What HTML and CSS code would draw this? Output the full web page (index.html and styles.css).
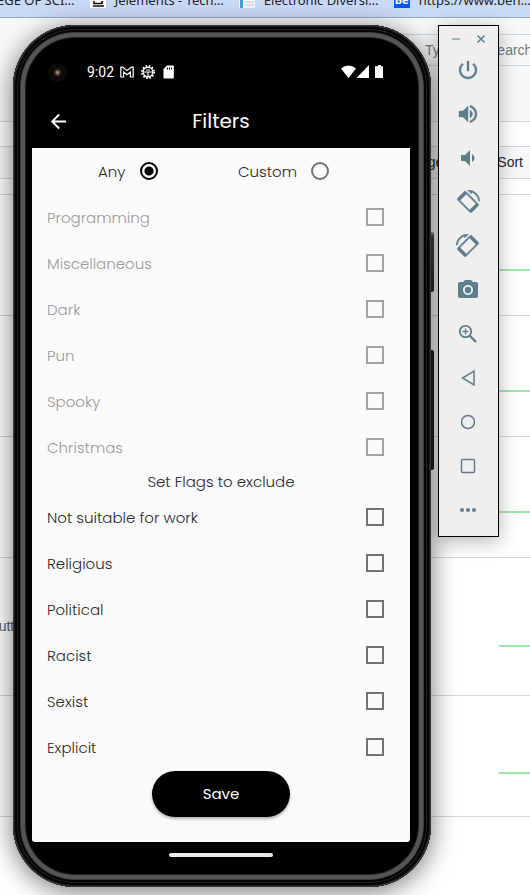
FILE: index.html
```html
<!DOCTYPE html>
<html lang="en">
<head>
<meta charset="utf-8">
<meta name="viewport" content="width=device-width, initial-scale=1">
<title>Filters</title>
<link rel="stylesheet" href="styles.css">
</head>
<body>
<div class="desktop">
  <div class="browser">
    <nav class="bookmarks">
      <a class="bookmark bookmark-first" href="#">EGE OF SCI…</a>
      <a class="bookmark" href="#"><svg class="favicon" viewBox="0 0 16 16"><rect width="16" height="16" fill="#fff"/><path d="M4 9v2.500h8V9M3 14h11" fill="none" stroke="#111" stroke-width="1.600"/></svg><span>Jelements - Tech…</span></a>
      <a class="bookmark" href="#"><svg class="favicon" viewBox="0 0 16 16"><rect width="16" height="16" fill="#f4f6f8"/><path d="M1 8h3v8H1z" fill="#39a5dc"/><path d="M6 10h9M6 13h9" stroke="#c3cbd3"/></svg><span>Electronic Diversi…</span></a>
      <a class="bookmark" href="#"><span class="favicon be">Be</span><span>https://www.beh…</span></a>
    </nav>
    <header class="site-header">
      <input class="search" type="text" placeholder="Type  /  to search" aria-label="Search">
    </header>
    <div class="list-bar"><button type="button">Language</button><button type="button">Sort</button></div>
    <div class="repos">
      <div class="repo"><i class="spark"></i></div>
      <div class="repo"><i class="spark"></i></div>
      <div class="repo"><i class="spark"></i></div>
      <div class="repo repo-tall"><span class="topic">Flutter</span><i class="spark"></i></div>
      <div class="repo"><i class="spark"></i></div>
    </div>
  </div>

  <div class="phone">
    <i class="side-key power-key"></i>
    <i class="side-key volume-key"></i>
    <div class="screen">
      <div class="status">
        <i class="lens"></i>
        <span class="clock">9:02</span>
        <svg class="s-icon" viewBox="0 0 14 14"><path d="M.8 12V2.200h2L7 5.600l4.200-3.400h2V12h-2.800V7L7 9.800 3.600 7v5z" fill="none" stroke="#fff" stroke-width="1.200"/></svg>
        <svg class="s-icon" viewBox="0 0 14 14"><circle cx="7" cy="7" r="6" fill="none" stroke="#fff" stroke-width="2" stroke-dasharray="1.600 1.540"/><circle cx="7" cy="7" r="4.800" fill="none" stroke="#fff" stroke-width="1.400"/><path d="M2.500 7h9M7 7v5M5 5h4" stroke="#fff" stroke-width="1.200"/></svg>
        <svg class="s-icon" viewBox="0 0 14 14"><path d="M5 .5h6q.8 0 .8.8v11.400q0 .8-.8.8H2.300q-.8 0-.8-.8V4z" fill="#fff"/><path d="M5.500 2.500v2M7.500 2.500v2M9.500 2.500v2" stroke="#000"/></svg>
        <svg class="signals" viewBox="0 0 44 14"><path d="M0 3.500Q7.500-2.500 15 3.500L7.500 13zM28 0v13H15.500zM37 0h3v1.200h2V13h-8V1.200h3z" fill="#fff"/></svg>
      </div>
      <div class="app-bar">
        <button class="back" type="button" aria-label="Back"><svg viewBox="0 0 24 24"><path d="M20 11H7.830l5.590-5.590L12 4l-8 8 8 8 1.410-1.410L7.830 13H20v-2z" fill="currentColor"/></svg></button>
        <h1>Filters</h1>
      </div>
      <form class="filters">
        <div class="mode">
          <label for="any">Any</label><input id="any" type="radio" name="mode" checked>
          <label for="custom">Custom</label><input id="custom" type="radio" name="mode">
        </div>
        <label class="row off">Programming<input type="checkbox" disabled></label>
        <label class="row off">Miscellaneous<input type="checkbox" disabled></label>
        <label class="row off">Dark<input type="checkbox" disabled></label>
        <label class="row off">Pun<input type="checkbox" disabled></label>
        <label class="row off">Spooky<input type="checkbox" disabled></label>
        <label class="row off">Christmas<input type="checkbox" disabled></label>
        <h2>Set Flags to exclude</h2>
        <label class="row">Not suitable for work<input type="checkbox"></label>
        <label class="row">Religious<input type="checkbox"></label>
        <label class="row">Political<input type="checkbox"></label>
        <label class="row">Racist<input type="checkbox"></label>
        <label class="row">Sexist<input type="checkbox"></label>
        <label class="row">Explicit<input type="checkbox"></label>
        <button class="save" type="button">Save</button>
      </form>
      <div class="home"><i></i></div>
    </div>
  </div>

  <div class="toolbar">
    <div class="window-keys">
      <button type="button" aria-label="Minimize"><svg viewBox="0 0 10 10"><path d="M1 5h8" stroke="#a3b3bb" stroke-width="2"/></svg></button>
      <button type="button" aria-label="Close"><svg viewBox="0 0 10 10"><path d="M1.500 1.500l7 7M8.500 1.500l-7 7" stroke="currentColor" stroke-width="1.500"/></svg></button>
    </div>
    <button class="tool" type="button" aria-label="Power"><svg viewBox="0 0 24 24"><path fill="currentColor" stroke="currentColor" stroke-width=".4" d="M13 3h-2v10h2V3zm4.830 2.170l-1.420 1.420C17.990 7.860 19 9.810 19 12c0 3.870-3.130 7-7 7s-7-3.130-7-7c0-2.190 1.010-4.140 2.580-5.420L6.170 5.170C4.230 6.820 3 9.260 3 12c0 4.970 4.030 9 9 9s9-4.030 9-9c0-2.740-1.230-5.180-3.170-6.830z"/></svg></button>
    <button class="tool" type="button" aria-label="Volume up"><svg viewBox="0 0 24 24"><path fill="currentColor" stroke="currentColor" stroke-width=".4" d="M3 9v6h4l5 5V4L7 9H3zm13.500 3c0-1.770-1.020-3.290-2.500-4.030v8.050c1.480-.73 2.500-2.250 2.500-4.020zM14 3.230v2.060c2.890.86 5 3.540 5 6.710s-2.110 5.850-5 6.710v2.060c4.010-.91 7-4.490 7-8.770s-2.990-7.860-7-8.770z"/></svg></button>
    <button class="tool" type="button" aria-label="Volume down"><svg viewBox="0 0 24 24"><path fill="currentColor" d="M18.500 12c0-1.770-1.020-3.290-2.500-4.030v8.050c1.480-.73 2.500-2.250 2.500-4.020zM5 9v6h4l5 5V4L9 9H5z"/></svg></button>
    <button class="tool" type="button" aria-label="Rotate left"><svg viewBox="0 0 24 24"><g id="rotate"><path fill="currentColor" stroke="currentColor" stroke-width=".4" d="M16.480 2.520c3.270 1.550 5.610 4.720 5.970 8.480h1.500C23.440 4.840 18.290 0 12 0l-.66.03 3.810 3.810 1.330-1.320zm-6.250-.77c-.59-.59-1.540-.59-2.120 0L1.750 8.110c-.59.59-.59 1.540 0 2.120l12.020 12.020c.59.59 1.540.59 2.120 0l6.360-6.360c.59-.59.59-1.540 0-2.120L10.230 1.750zm4.600 19.440L2.810 9.170l6.360-6.360 12.020 12.020-6.360 6.360z"/><path d="M2.800 9.800l7-7M14.200 21.200l7-7" stroke="currentColor" stroke-width="3"/></g></svg></button>
    <button class="tool" type="button" aria-label="Rotate right"><svg viewBox="0 0 24 24"><use href="#rotate" transform="matrix(-1 0 0 1 24 0)"/></svg></button>
    <button class="tool" type="button" aria-label="Take screenshot"><svg viewBox="0 0 24 24"><circle cx="12" cy="12" r="3.200" fill="currentColor"/><path fill="currentColor" d="M9 2L7.170 4H4c-1.100 0-2 .9-2 2v12c0 1.100.9 2 2 2h16c1.100 0 2-.9 2-2V6c0-1.100-.9-2-2-2h-3.170L15 2H9zm3 15c-2.760 0-5-2.240-5-5s2.240-5 5-5 5 2.240 5 5-2.240 5-5 5z"/></svg></button>
    <button class="tool" type="button" aria-label="Zoom"><svg viewBox="0 0 24 24"><path d="M13.500 13.500l6.500 6.500" stroke="currentColor" stroke-width="2.400"/><circle cx="9.500" cy="9.500" r="5.700" fill="none" stroke="currentColor" stroke-width="1.800"/><path d="M6.500 9.500h6M9.500 6.500v6" stroke="currentColor" stroke-width="1.300"/></svg></button>
    <button class="tool" type="button" aria-label="Back"><svg viewBox="0 0 24 24"><path d="M18 5v14L6.500 12z" fill="none" stroke="currentColor" stroke-width="1.500"/></svg></button>
    <button class="tool" type="button" aria-label="Home"><svg viewBox="0 0 24 24"><circle cx="12" cy="12" r="6.500" fill="none" stroke="currentColor" stroke-width="1.500"/></svg></button>
    <button class="tool" type="button" aria-label="Overview"><svg viewBox="0 0 24 24"><rect x="5.500" y="5.500" width="13" height="13" rx="1" fill="none" stroke="currentColor" stroke-width="1.500"/></svg></button>
    <button class="tool" type="button" aria-label="More"><svg viewBox="0 0 24 24"><g fill="currentColor"><circle cx="6" cy="12" r="2"/><circle cx="12" cy="12" r="2"/><circle cx="18" cy="12" r="2"/></g></svg></button>
  </div>
</div>
</body>
</html>
```
FILE: styles.css
```css
* { box-sizing: border-box; }
body { margin: 0; font-family: "Liberation Sans", Arial, sans-serif; }
button { border: 0; padding: 0; background: none; color: inherit; font: inherit; }
.desktop { position: relative; min-height: 100vh; overflow: hidden; background: #fff; }

/* Browser window at the back */
.bookmarks { display: flex; align-items: flex-end; gap: 15px; height: 18px; overflow: hidden; background: #c9daf6; border-bottom: 1px solid #93a9c9; }
.bookmark { display: flex; flex: none; align-items: center; gap: 9px; height: 26px; margin-bottom: 4px; color: #1f2328; font: 13px "Noto Sans", sans-serif; text-decoration: none; }
.bookmark-first { margin-left: -3px; }
.favicon { width: 16px; height: 16px; }
.be { background: #0057ff; color: #fff; font-size: 11px; line-height: 16px; font-weight: 700; text-align: center; }
.site-header { display: flex; justify-content: flex-end; height: 104px; padding-top: 16px; background: #f6f8fa; border-bottom: 1px solid #d0d7de; }
.search { width: 140px; height: 32px; padding: 0 0 0 35px; border: solid #d0d7de; border-width: 1px 0; background: transparent; font: 14px "Liberation Sans", sans-serif; }
.search::placeholder { color: #757b82; }
.list-bar { display: flex; justify-content: flex-end; gap: 54px; height: 33px; margin-top: 24px; padding-right: 7px; border: solid #d0d7de; border-width: 1px 0; background: #f6f8fa; color: #24292f; font-size: 14px; line-height: 30px; }
.list-bar button { display: block; height: 30px; }
.repos { margin-top: 15px; border-top: 1px solid #d0d7de; }
.repo { display: flex; align-items: flex-end; justify-content: flex-end; height: 121px; padding-bottom: 44px; border-bottom: 1px solid #d0d7de; }
.repo:last-child { padding-bottom: 42px; }
.repo-tall { height: 138px; padding-bottom: 48px; }
.topic { flex: 1; margin-left: -13px; padding-bottom: 13px; color: #57606a; font-size: 14px; line-height: 16px; }
.spark { width: 31px; height: 2px; background: #9be9a8; }

/* Phone */
.phone { position: absolute; top: 25px; left: 13px; right: 99px; padding: 20px 21px 20px 19px; border-radius: 62px; background: #000; box-shadow: inset 0 0 0 1px #3a3a3a, inset 0 0 0 2px #1c1c1c, inset 0 0 0 4px #050505, inset 0 0 0 5px #222, inset 0 0 0 7px #050505, inset 0 0 0 8px #3c3c3c, inset 0 0 0 12px #555, inset 0 0 1px 13px #222, 0 4px 26px rgba(0, 0, 0, .55); }
.side-key { position: absolute; right: -3px; width: 3px; border-radius: 0 2px 2px 0; background: #161616; }
.power-key { top: 207px; height: 60px; background: linear-gradient(#777, #333 8%, #222); }
.volume-key { top: 325px; height: 120px; }
.screen { color: #2b2b2b; font-family: Poppins, Inter, sans-serif; font-size: 15px; font-weight: 300; }
.status { display: flex; align-items: center; gap: 7px; height: 54px; padding: 0 25px 0 16px; color: #fff; }
.lens { width: 19px; height: 19px; margin-right: 13px; border-radius: 50%; background: radial-gradient(circle, #a07c6c 0 1px, #2a1e1a 3px, #0b0b0b 5px); }
.clock { margin-right: -1px; font: 14px Roboto, sans-serif; }
.s-icon { width: 14px; height: 14px; }
.signals { width: 44px; height: 14px; margin-left: auto; }
.app-bar { display: grid; grid-template-columns: 52px 1fr 52px; align-items: center; height: 49px; padding-bottom: 5px; color: #fff; }
.back { display: grid; place-items: center; height: 24px; }
.back svg { width: 23px; height: 23px; }
h1 { margin: 0; font-size: 20px; font-weight: 400; text-align: center; }
.filters { display: flex; flex-direction: column; height: 694px; background: #fafafa; border-radius: 0 0 3px 3px; }
.mode { display: grid; grid-template-columns: 42px 98px 73px 18px; align-items: center; height: 46px; padding-left: 66px; }
input[type="radio"], input[type="checkbox"] { appearance: none; width: 18px; height: 18px; margin: 0; border: 2px solid #737373; background: transparent; }
input[type="radio"] { border-radius: 50%; }
input[type="radio"]:checked { border-color: #000; background: radial-gradient(circle, #000 0 4px, transparent 5px); }
.row { display: flex; align-items: center; justify-content: space-between; height: 46px; padding: 0 26px 0 15px; }
.off { color: #9b9b9b; }
.off input[type="checkbox"] { border-color: #a3a3a3; }
h2 { margin: 0; font-size: 15px; font-weight: 300; line-height: 24px; text-align: center; }
.save { align-self: center; width: 138px; height: 46px; margin-top: 1px; border-radius: 23px; background: #000; color: #fff; font-weight: 400; line-height: 44px; box-shadow: 0 2px 3px rgba(0, 0, 0, .3); }
.home { display: grid; place-items: center; height: 25px; }
.home i { width: 104px; height: 4px; border-radius: 2px; background: #e8e8e8; }

/* Emulator controls */
.toolbar { position: absolute; top: 25px; right: 31px; width: 61px; padding-bottom: 4px; border: 1px solid #000; background: #efefef; color: #607d8b; box-shadow: 0 4px 18px rgba(0, 0, 0, .3); }
.window-keys { display: flex; justify-content: center; gap: 15px; height: 22px; padding-top: 3px; }
.window-keys button { display: grid; place-items: center; width: 10px; }
.window-keys svg { width: 10px; height: 10px; }
.tool { display: grid; place-items: center; width: 100%; height: 44px; padding-right: 1px; }
.tool svg { width: 24px; height: 24px; }
```
